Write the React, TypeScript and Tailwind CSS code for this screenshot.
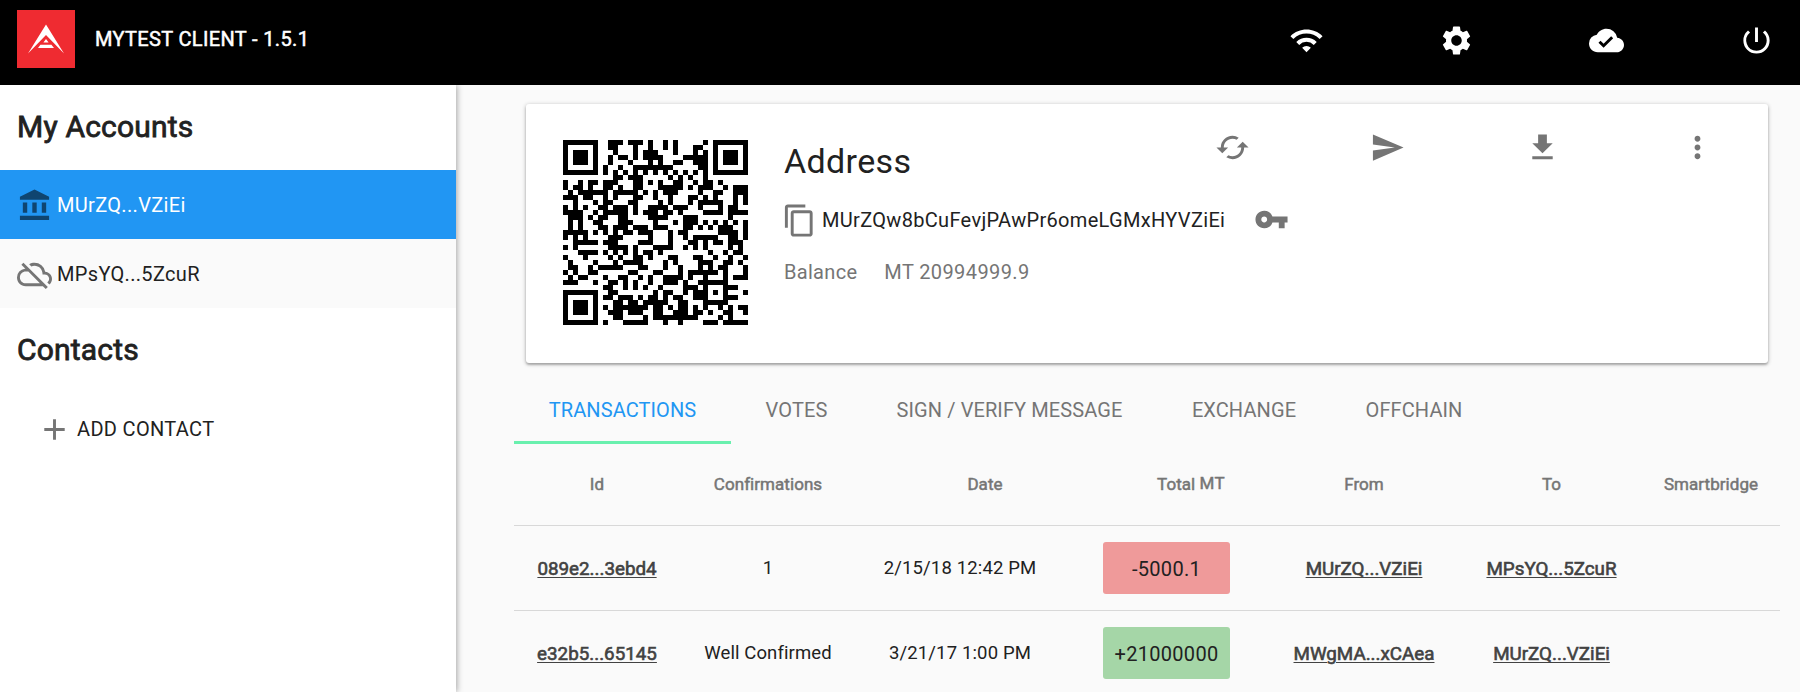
import React from "react";
import {
  MdWifi, MdSettings, MdCloudDone, MdPowerSettingsNew, MdAccountBalance, MdOutlineCloudOff,
  MdAdd, MdContentCopy, MdVpnKey, MdSend, MdFileDownload, MdMoreVert, MdCached,
} from "react-icons/md";

const ADDRESS = "MUrZQw8bCuFevjPAwPr6omeLGMxHYVZiEi";

// QR encoder: version 5, error correction level M, byte mode, mask 7.
const SIZE = 37;
const EC_LENGTH = 24;
const BLOCK_LENGTH = 43;

function gfTables() {
  const exp: number[] = [];
  const log: number[] = [];
  let x = 1;
  for (let i = 0; i < 255; i++) {
    exp[i] = x;
    log[x] = i;
    x <<= 1;
    if (x & 256) x ^= 0x11d;
  }
  return { exp, log };
}

const { exp, log } = gfTables();
const mul = (a: number, b: number) => (a && b ? exp[(log[a] + log[b]) % 255] : 0);

function ecc(data: number[]) {
  let gen = [1];
  for (let i = 0; i < EC_LENGTH; i++) {
    const next: number[] = new Array(gen.length + 1).fill(0);
    gen.forEach((g, k) => {
      next[k] ^= g;
      next[k + 1] ^= mul(g, exp[i]);
    });
    gen = next;
  }
  const rem = [...data, ...new Array(EC_LENGTH).fill(0)];
  for (let i = 0; i < data.length; i++) {
    const f = rem[i];
    gen.forEach((g, k) => (rem[i + k] ^= mul(g, f)));
  }
  return rem.slice(data.length);
}

function codewords(text: string) {
  let bits = "0100" + text.length.toString(2).padStart(8, "0");
  for (const c of text) bits += c.charCodeAt(0).toString(2).padStart(8, "0");
  bits += "0000";
  while (bits.length % 8) bits += "0";
  const data: number[] = [];
  for (let i = 0; i < bits.length; i += 8) data.push(parseInt(bits.slice(i, i + 8), 2));
  for (let pad = 0xec; data.length < BLOCK_LENGTH * 2; pad ^= 0xec ^ 0x11) data.push(pad);
  const parts = [data.slice(0, BLOCK_LENGTH), data.slice(BLOCK_LENGTH)];
  const checks = parts.map(ecc);
  const out: number[] = [];
  for (let i = 0; i < BLOCK_LENGTH; i++) parts.forEach((p) => out.push(p[i]));
  for (let i = 0; i < EC_LENGTH; i++) checks.forEach((c) => out.push(c[i]));
  return out;
}

function qrMatrix(text: string) {
  const m: (boolean | null)[][] = Array.from({ length: SIZE }, () => new Array(SIZE).fill(null));
  const finder = (r: number, c: number) => {
    for (let y = -1; y <= 7; y++)
      for (let x = -1; x <= 7; x++) {
        if (r + y < 0 || r + y >= SIZE || c + x < 0 || c + x >= SIZE) continue;
        const d = Math.max(Math.abs(y - 3), Math.abs(x - 3));
        m[r + y][c + x] = d === 3 || d < 2;
      }
  };
  finder(0, 0);
  finder(0, SIZE - 7);
  finder(SIZE - 7, 0);
  for (let i = 8; i < SIZE - 8; i++) m[6][i] = m[i][6] = i % 2 === 0;
  for (let y = -2; y <= 2; y++)
    for (let x = -2; x <= 2; x++) m[30 + y][30 + x] = Math.max(Math.abs(y), Math.abs(x)) !== 1;

  const bits = 0b100101010100000;
  for (let i = 0; i < 15; i++) {
    const on = ((bits >> i) & 1) === 1;
    if (i < 6) m[i][8] = on;
    else if (i < 8) m[i + 1][8] = on;
    else m[SIZE - 15 + i][8] = on;
    if (i < 8) m[8][SIZE - 1 - i] = on;
    else if (i < 9) m[8][7] = on;
    else m[8][14 - i] = on;
  }
  m[SIZE - 8][8] = true;

  const words = codewords(text);
  let n = 0;
  let up = true;
  for (let col = SIZE - 1; col > 0; col -= 2) {
    if (col === 6) col--;
    for (let k = 0; k < SIZE; k++) {
      const row = up ? SIZE - 1 - k : k;
      for (const c of [col, col - 1]) {
        if (m[row][c] !== null) continue;
        const bit = n < words.length * 8 ? (words[n >> 3] >> (7 - (n & 7))) & 1 : 0;
        n++;
        m[row][c] = (bit === 1) !== ((((row * c) % 3) + ((row + c) % 2)) % 2 === 0);
      }
    }
    up = !up;
  }
  return m;
}

function QrCode({ value }: { value: string }) {
  const d = qrMatrix(value)
    .flatMap((row, y) => row.map((on, x) => (on ? `M${x} ${y}h1v1h-1z` : "")))
    .join("");
  return (
    <svg viewBox="0 0 37 37" className="h-[185px] w-[185px] shrink-0" shapeRendering="crispEdges">
      <path d={d} fill="#000" />
    </svg>
  );
}

function Logo() {
  return (
    <svg viewBox="0 0 58 58" className="h-[58px] w-[58px] shrink-0">
      <rect width="58" height="58" fill="#ef2b31" />
      <path d="M29 14.5 47 43.5 29 25 11 43.5Z" fill="#fff" />
      <path d="M29 29 31.6 32.6H26.4ZM23.4 34.8H34.4L37 38H21Z" fill="#fff" />
    </svg>
  );
}

function Account({ icon, label, active }: { icon: React.ReactNode; label: string; active?: boolean }) {
  return (
    <div className={`flex h-[69px] items-center pl-[17px] ${active ? "bg-[#2196f3] text-white" : "bg-[#fafafa]"}`}>
      <span className={`mt-[2px] mr-[5px] ${active ? "text-[#0f4570]" : "text-[#757575]"}`}>{icon}</span>
      <span className="pt-[1px] text-[20px] tracking-[0.33px]">{label}</span>
    </div>
  );
}

const tabs = [
  { label: "TRANSACTIONS", width: "w-[217px]", active: true },
  { label: "VOTES", width: "w-[131px]" },
  { label: "SIGN / VERIFY MESSAGE", width: "w-[295px]" },
  { label: "EXCHANGE", width: "w-[174px]" },
  { label: "OFFCHAIN", width: "w-[166px]" },
];

const rows = [
  { id: "089e2...3ebd4", conf: "1", date: "2/15/18 12:42 PM", total: "-5000.1", color: "bg-[#ef9a9a]", from: "MUrZQ...VZiEi", to: "MPsYQ...5ZcuR" },
  { id: "e32b5...65145", conf: "Well Confirmed", date: "3/21/17 1:00 PM", total: "+21000000", color: "bg-[#a5d6a7]", from: "MWgMA...xCAea", to: "MUrZQ...VZiEi" },
];

const grid = "grid grid-cols-[166px_176px_247px_167px_188px_187px_135px] text-center";
const link = "pt-[2px] text-[#424242] underline decoration-1 underline-offset-[2px] text-[18.8px] [-webkit-text-stroke:0.6px_#424242]";
const heading = "flex h-[85px] items-center pb-[2px] pl-[17px] text-[30px] tracking-[0.2px] [-webkit-text-stroke:0.8px_#212121]";

export default function App() {
  return (
    <div className="flex h-[692px] w-[1800px] flex-col overflow-hidden bg-[#fafafa] font-['Roboto',sans-serif] text-[#212121]">
      <header className="flex h-[85px] shrink-0 items-start bg-black pl-[17px] text-white">
        <div className="pt-[10px]"><Logo /></div>
        <h1 className="mt-[24px] ml-[20px] text-[20px] leading-[30px] font-normal tracking-[0.35px] [-webkit-text-stroke:0.5px_white]">MYTEST CLIENT - 1.5.1</h1>
        <div className="mt-[23px] mr-[26px] ml-auto flex gap-[115px]">
          <MdWifi size={35} />
          <MdSettings size={35} />
          <MdCloudDone size={35} />
          <MdPowerSettingsNew size={35} />
        </div>
      </header>
      <div className="flex min-h-0 flex-1">
        <aside className="w-[456px] shrink-0 bg-white shadow-[1px_0_6px_rgba(0,0,0,0.35)]">
          <h2 className={heading}>My Accounts</h2>
          <Account active icon={<MdAccountBalance size={35} />} label="MUrZQ...VZiEi" />
          <Account icon={<MdOutlineCloudOff size={35} />} label="MPsYQ...5ZcuR" />
          <h2 className={heading}>Contacts</h2>
          <div className="flex h-[72px] items-center pl-[37px]">
            <MdAdd size={35} className="text-[#757575]" />
            <span className="ml-[5px] text-[20px] tracking-[0.33px]">ADD CONTACT</span>
          </div>
        </aside>
        <main className="min-w-0 flex-1 pl-[58px]">
          <section className="mt-[19px] ml-[12px] flex h-[259px] w-[1242px] rounded-[3px] bg-white pt-[36px] pl-[37px] shadow-[0_1px_4px_rgba(0,0,0,0.3),0_2px_2px_rgba(0,0,0,0.18)]">
            <QrCode value={`{"a":"${ADDRESS}"}`} />
            <div className="ml-[36px] w-[510px] shrink-0">
              <h3 className="text-[34px] leading-[42px] tracking-[0.35px]">Address</h3>
              <div className="mt-[21px] flex h-[35px] items-center">
                <MdContentCopy size={35} className="-ml-[2px] shrink-0 text-[#757575]" />
                <span className="ml-[5px] pb-[2px] text-[20px] tracking-[0.32px]">{ADDRESS}</span>
                <MdVpnKey size={35} className="mb-[2px] ml-[29px] shrink-0 text-[#757575]" />
              </div>
              <div className="mt-[19px] flex gap-[27px] text-[20px] leading-[30px] text-[#757575]">
                <span className="tracking-[0.3px]">Balance</span>
                <span className="tracking-[0.4px]">MT 20994999.9</span>
              </div>
            </div>
            <div className="-mt-[10px] -ml-[79px] flex h-[35px] gap-[120px] text-[#757575]">
              <MdCached size={35} />
              <MdSend size={35} />
              <MdFileDownload size={35} />
              <MdMoreVert size={35} />
            </div>
          </section>
          <nav className="mt-[12px] flex h-[69px]">
            {tabs.map((t) => (
              <div key={t.label} className={`flex items-center justify-center border-b-3 pt-[4px] text-[20px] tracking-[0.1px] ${t.width} ${t.active ? "border-[#69f0ae] text-[#2196f3]" : "border-transparent text-[#757575]"}`}>{t.label}</div>
            ))}
          </nav>
          <div className="w-[1266px]">
            <div className={`${grid} h-[81px] items-center text-[17px] tracking-[0.05px] text-[#757575] [-webkit-text-stroke:0.5px_#757575]`}>
              <span>Id</span><span>Confirmations</span><span className="pl-[11px]">Date</span>
              <span className="pl-[9px]">Total <span className="relative -top-px tracking-[0.3px]">MT</span></span>
              <span>From</span><span>To</span><span className="pr-[3px]">Smartbridge</span>
            </div>
            {rows.map((r) => (
              <div key={r.id} className={`${grid} h-[85px] items-center border-t border-[#d8d8d8]`}>
                <span className={link}>{r.id}</span>
                <span className="pt-[2px] text-[18.5px] tracking-[0.1px]">{r.conf}</span>
                <span className="pt-[1px] pr-[39px] text-[18.5px] tracking-[0.15px]">{r.date}</span>
                <span className={`flex h-[52px] w-[127px] items-center justify-center rounded-[3px] pt-[1px] text-[20px] tracking-[0.3px] ${r.color}`}>{r.total}</span>
                <span className={link}>{r.from}</span>
                <span className={link}>{r.to}</span>
              </div>
            ))}
          </div>
        </main>
      </div>
    </div>
  );
}
